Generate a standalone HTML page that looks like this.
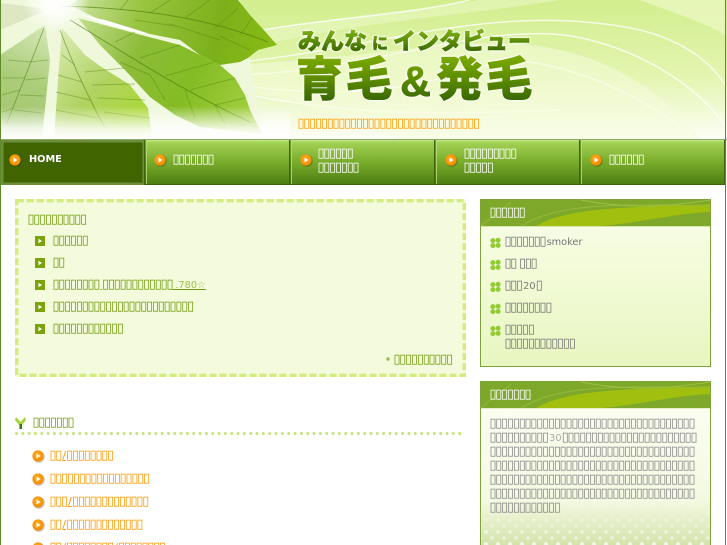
<!DOCTYPE html>
<html lang="ja"><head><meta charset="utf-8"><title>みんなにインタビュー 育毛&amp;発毛</title>
<style>
html,body{margin:0;padding:0;background:#fff}
#p{position:relative;width:727px;height:545px;overflow:hidden;background:#fff;font:9.75px/12px "DejaVu Sans","Liberation Sans","Noto Sans CJK JP",sans-serif}
#p svg{position:absolute;left:0;top:0}
.t{position:absolute;white-space:nowrap;line-height:12px;height:12px;margin-top:1px;margin-left:-.7px}
.x{font-size:13px;letter-spacing:-1.3px}
.l{padding-left:1.300px}
.d{padding-left:1.300px;font-size:11px}
.n{color:#fff;text-decoration:underline}
.g{color:#719c0c;text-decoration:underline}
.o{color:#ff9900;text-decoration:underline}
.s{color:#777}
.m{color:#888}
.h{position:absolute;font-family:"Noto Sans CJK JP",sans-serif;font-weight:900;white-space:nowrap;-webkit-background-clip:text;background-clip:text;color:transparent;-webkit-text-stroke:.6px transparent;filter:drop-shadow(0 0 1px #fff) drop-shadow(0 0 1px #fff)}
</style></head><body><div id="p">
<svg width="727" height="545" viewBox="0 0 727 545">
<defs>
<linearGradient id="bg" x1="0" y1="0" x2="0" y2="1"><stop offset="0" stop-color="#d2ee8e"/><stop offset=".55" stop-color="#e3f5b0"/><stop offset="1" stop-color="#fcfef5"/></linearGradient>
<linearGradient id="l1" gradientUnits="userSpaceOnUse" x1="80" y1="0" x2="277" y2="50"><stop offset="0" stop-color="#c8e098"/><stop offset=".3" stop-color="#98c440"/><stop offset=".7" stop-color="#7cb01a"/><stop offset="1" stop-color="#88bc14"/></linearGradient>
<linearGradient id="l2" gradientUnits="userSpaceOnUse" x1="75" y1="20" x2="250" y2="120"><stop offset="0" stop-color="#c4de90"/><stop offset=".35" stop-color="#8cbc38"/><stop offset=".65" stop-color="#84bc24"/><stop offset="1" stop-color="#a4d040"/></linearGradient>
<linearGradient id="l3" gradientUnits="userSpaceOnUse" x1="60" y1="30" x2="140" y2="110"><stop offset="0" stop-color="#dcecb8"/><stop offset=".6" stop-color="#b0d260"/><stop offset="1" stop-color="#acd83c"/></linearGradient>
<linearGradient id="l4" gradientUnits="userSpaceOnUse" x1="45" y1="30" x2="10" y2="110"><stop offset="0" stop-color="#d4e6b4"/><stop offset=".6" stop-color="#accd7a"/><stop offset="1" stop-color="#a6c872"/></linearGradient>
<linearGradient id="fade" x1="0" y1="0" x2="0" y2="1"><stop offset="0" stop-color="#fff" stop-opacity="0"/><stop offset=".7" stop-color="#fff" stop-opacity=".85"/><stop offset="1" stop-color="#fff"/></linearGradient>
<radialGradient id="sun" cx=".5" cy=".5" r=".5"><stop offset="0" stop-color="#fff"/><stop offset=".4" stop-color="#fff" stop-opacity=".85"/><stop offset="1" stop-color="#fff" stop-opacity="0"/></radialGradient>
<linearGradient id="nv" x1="0" y1="0" x2="0" y2="1"><stop offset="0" stop-color="#a9d95e"/><stop offset=".12" stop-color="#9ccb4e"/><stop offset=".5" stop-color="#78ab2a"/><stop offset="1" stop-color="#4a7c12"/></linearGradient>
<linearGradient id="sb" x1="0" y1="0" x2="0" y2="1"><stop offset="0" stop-color="#fafeea"/><stop offset="1" stop-color="#e8f6c0"/></linearGradient>
<linearGradient id="sb2" x1="0" y1="0" x2="0" y2="1"><stop offset="0" stop-color="#fdfff4"/><stop offset=".7" stop-color="#f4f9e2"/><stop offset="1" stop-color="#cfe0a4"/></linearGradient>
<linearGradient id="dm" x1="0" y1="0" x2="0" y2="1"><stop offset="0" stop-color="#fff" stop-opacity="0"/><stop offset="1" stop-color="#fff" stop-opacity=".85"/></linearGradient>
<mask id="dmk"><rect x="481" y="505" width="229" height="40" fill="url(#dm)"/></mask>
<pattern id="dia" width="12" height="12" patternUnits="userSpaceOnUse"><path d="M6 1.500 8.500 4 6 6.500 3.500 4Z" fill="#fff" fill-opacity=".85"/><path d="M0 7.500 2.500 10 0 12.500-2.500 10ZM12 7.500 14.500 10 12 12.500 9.500 10Z" fill="#fff" fill-opacity=".6"/></pattern>
<radialGradient id="ob" cx=".45" cy=".4" r=".6"><stop offset="0" stop-color="#ffb020"/><stop offset="1" stop-color="#f58a00"/></radialGradient>
<g id="oi"><circle cx=".8" cy=".8" r="6" fill="#000" fill-opacity=".22"/><circle r="5.600" fill="url(#ob)"/><path d="M-1.500-2.500 2.500 0-1.500 2.500Z" fill="#fff"/></g>
<g id="sq"><rect x="-5" y="-5" width="10" height="10" fill="#7ba30c"/><path d="M-1.500-2.200 2 0-1.500 2.200Z" fill="#fff"/></g>
<g id="cl" fill="#93cc32"><circle cx="-2.600" cy="-2.400" r="2.500"/><circle cx="2.600" cy="-2.700" r="2.500"/><circle cx="-2.600" cy="2.600" r="2.500"/><circle cx="2.600" cy="2.400" r="2.500"/><circle r="1" fill="#fff"/></g>
<g id="sw"><rect width="229" height="26" fill="#7ea82a"/><path d="M55 26C90 6 150 8 229 4V12C190 14 165 22 120 26Z" fill="#a0bf0e"/><path d="M0 26 30 2M40 26C70 8 110 2 229 6" stroke="#94b93a" stroke-width="1" fill="none"/><path d="M100 0C150 10 190 6 229 0" stroke="#9dc03f" fill="none"/></g>
</defs>

<!-- header -->
<rect x="0" y="0" width="727" height="139" fill="url(#bg)"/>
<path d="M262 30C350 15 420 10 480 0H560C470 15 370 20 262 45Z" fill="#eaf8c4" fill-opacity=".6"/>
<path d="M262 30C330 18 400 16 470 0M240 62C380 48 500 0 640 30 680 40 710 60 725 85M240 75C380 70 500 15 590 40 650 55 700 90 725 125M240 85C340 100 420 90 500 60 570 60 650 100 690 135M250 95C350 115 440 115 560 110" stroke="#fff" stroke-opacity=".75" stroke-width="1.500" fill="none"/>
<path d="M220 65C380 60 470 30 560 50 630 65 680 110 700 139H400C340 115 290 100 240 90Z" fill="#f6fcdc" fill-opacity=".55"/>
<path d="M640 0C680 15 710 25 725 35V0Z" fill="#eef9c8" fill-opacity=".7"/>
<!-- pale backdrop under the leaves -->
<path d="M0 0H240L262 130V139H0Z" fill="#eff8da"/>
<!-- leaves -->
<path d="M78 0H238L250 15 262 28 277 45 258 50 248 58 240 62 220 65 200 55 180 40 145 33 100 20 70 5Z" fill="url(#l1)"/>
<path d="M78 18 145 36 180 45 220 65 235 78 245 95 250 110 262 134 200 127 175 115 150 97 125 70 100 45Z" fill="url(#l2)"/>
<path d="M62 28 85 55 100 66 130 85 148 108 152 139H54L58 80Z" fill="url(#l3)"/>
<path d="M45 25 0 55V139H42L50 60Z" fill="url(#l4)"/>
<path d="M0 3 40 8 42 12 0 30Z" fill="#dde8c2"/>
<g stroke="#4e8510" stroke-opacity=".4" fill="none">
<path d="M60 6C130 8 200 15 268 42" stroke-opacity=".7"/>
<path d="M70 20C120 50 180 90 250 122" stroke-opacity=".7"/>
<path d="M60 30C75 70 90 100 105 128" stroke-opacity=".55"/>
<path d="M44 28C30 65 18 95 6 125" stroke-opacity=".55"/>
<path d="M120 10 128 0M150 13 170 0M185 18 210 0M215 28 238 8M240 35 252 18M135 20 175 26M170 24 220 40M220 36 250 50M115 42 135 32M140 58 180 45M165 76 215 62M190 90 235 78M215 105 245 98M120 62 150 75M150 75 165 100M185 90 195 118M215 105 225 124M85 72 125 68M92 85 135 84M98 98 145 100M104 112 150 118M75 65 62 55M82 82 58 75M90 100 56 92M98 118 56 110M30 62 8 60M25 78 3 78M20 90 2 95M14 108 2 112M30 62 48 60M25 80 46 78M20 95 44 96M14 110 42 113"/>
</g>
<path d="M78 14 105 20 147 33 148 35 105 24Z" fill="#fff"/>
<path d="M0 106H290V139H0Z" fill="url(#fade)"/>
<circle cx="56" cy="0" r="34" fill="url(#sun)"/>

<!-- nav -->
<rect x="0" y="139" width="727" height="1" fill="#8da869"/>
<rect x="1" y="140" width="724" height="45" fill="url(#nv)"/>
<rect x="1" y="140" width="724" height="1.500" fill="#c3e786" fill-opacity=".8"/>
<rect x="1" y="184" width="724" height="1" fill="#3f660e"/>
<rect x="1" y="140" width="143" height="45" fill="#6d8f3c"/>
<rect x="3.500" y="142.500" width="139" height="40" fill="#3f6400"/>
<rect x="144" y="140" width="1.500" height="45" fill="#3f660e"/><rect x="289" y="140" width="1.500" height="45" fill="#3f660e"/><rect x="434" y="140" width="1.500" height="45" fill="#3f660e"/><rect x="579" y="140" width="1.500" height="45" fill="#3f660e"/><rect x="724" y="140" width="1.500" height="45" fill="#3f660e"/>
<rect x="146" y="140" width=".8" height="44" fill="#b9e07a"/><rect x="291" y="140" width=".8" height="44" fill="#b9e07a"/><rect x="436" y="140" width=".8" height="44" fill="#b9e07a"/><rect x="581" y="140" width=".8" height="44" fill="#b9e07a"/>
<use href="#oi" x="15" y="160"/><use href="#oi" x="160" y="160"/><use href="#oi" x="306" y="160"/><use href="#oi" x="451" y="160"/><use href="#oi" x="596" y="160"/>

<!-- page borders -->
<rect x="0" y="0" width="1" height="545" fill="#5f8a2a"/>
<rect x="725" y="0" width="1" height="545" fill="#5f8a2a"/>

<!-- dashed box -->
<rect x="15" y="199" width="451" height="178" fill="#f4fbdd"/>
<rect x="16.700" y="200.700" width="447.600" height="174.600" fill="none" stroke="#d3ec80" stroke-width="3.400" stroke-dasharray="7 3"/>
<use href="#sq" x="40" y="241"/><use href="#sq" x="40" y="263"/><use href="#sq" x="40" y="285"/><use href="#sq" x="40" y="307"/><use href="#sq" x="40" y="329"/>
<circle cx="388" cy="359" r="1.700" fill="#9dbb50"/>

<!-- heading -->
<path d="M16 417 20.500 422 25 417 26 420 22 425H19L15 420Z" fill="#a7d43a"/><rect x="19.500" y="424" width="2.500" height="5" fill="#2f7a10"/>
<path d="M16.500 433.500h447" stroke="#c4e47a" stroke-width="3" stroke-linecap="round" stroke-dasharray="0 6.330"/>
<use href="#oi" x="38" y="456"/><use href="#oi" x="38" y="479"/><use href="#oi" x="38" y="502"/><use href="#oi" x="38" y="525"/><use href="#oi" x="38" y="548"/>

<!-- side box 1 -->
<rect x="480.500" y="199.500" width="230" height="167" fill="url(#sb)" stroke="#7ea33a"/>
<use href="#sw" x="481" y="200"/><rect x="481" y="226" width="229" height="1" fill="#d6e8a8"/>
<use href="#cl" x="495.500" y="243"/><use href="#cl" x="495.500" y="265"/><use href="#cl" x="495.500" y="287"/><use href="#cl" x="495.500" y="309"/><use href="#cl" x="495.500" y="331"/>

<!-- side box 2 -->
<rect x="480.500" y="381.500" width="230" height="170" fill="url(#sb2)" stroke="#7ea33a"/>
<rect x="481" y="505" width="229" height="40" fill="url(#dia)" mask="url(#dmk)"/>
<use href="#sw" x="481" y="382"/><rect x="481" y="408" width="229" height="1" fill="#e6f0c8"/>
</svg>

<div class="h" style="left:298px;top:21px;font-size:23px;line-height:36px;background-image:linear-gradient(#7cae10 25%,#3c6c00 75%)">みんな<span style="font-size:16px;padding:0 5px">に</span>インタビュー</div>
<div class="h" style="left:296px;top:41px;font-size:47px;line-height:70px;letter-spacing:2.500px;background-image:linear-gradient(#7aa800 22%,#5c8c00 50%,#386800 78%)">育毛<span style="font-family:'Liberation Sans',sans-serif;font-size:43px;padding:0 5px;letter-spacing:0">&amp;</span>発毛</div>
<div class="t x" style="left:298px;top:117px;color:#ff9900">▯▯▯▯▯▯▯▯▯▯▯▯▯▯▯▯▯▯▯▯▯▯▯▯▯▯▯▯▯▯▯</div>

<div class="t" style="left:29.700px;top:153px;color:#fff;font-weight:bold">HOME</div>
<div class="t x n" style="left:173px;top:153px">▯▯▯▯▯▯▯</div>
<div class="t x n" style="left:318px;top:147px">▯▯▯▯▯▯</div>
<div class="t x n" style="left:318px;top:161px">▯▯▯▯▯▯▯</div>
<div class="t x n" style="left:464px;top:147px">▯▯▯▯▯▯▯▯▯</div>
<div class="t x n" style="left:464px;top:161px">▯▯▯▯▯</div>
<div class="t x n" style="left:609px;top:153px">▯▯▯▯▯▯</div>

<div class="t x" style="left:28px;top:213px;color:#719c0c">▯▯▯▯▯▯▯▯▯▯</div>
<div class="t x g" style="left:53px;top:234px">▯▯▯▯▯▯</div>
<div class="t x g" style="left:53px;top:256px">▯▯</div>
<div class="t g" style="left:53px;top:278px"><span class="x">▯▯▯▯▯▯▯▯ ▯▯▯▯▯▯▯▯▯▯▯▯</span> <span style="color:#9cc04a">.780☆</span></div>
<div class="t x g" style="left:53px;top:300px">▯▯▯▯▯▯▯▯▯▯▯▯▯▯▯▯▯▯▯▯▯▯▯▯</div>
<div class="t x g" style="left:53px;top:322px">▯▯▯▯▯▯▯▯▯▯▯▯</div>
<div class="t x g" style="left:394px;top:353px">▯▯▯▯▯▯▯▯▯▯</div>

<div class="t x" style="left:33px;top:416px;color:#719c0c">▯▯▯▯▯▯▯</div>
<div class="t o" style="left:50px;top:449px"><span class="x">▯▯</span><span class="d">/</span><span class="x">▯▯▯▯▯▯▯▯</span></div>
<div class="t x o" style="left:50px;top:472px">▯▯▯▯▯▯▯▯▯▯▯▯▯▯▯▯▯</div>
<div class="t o" style="left:50px;top:495px"><span class="x">▯▯▯</span><span class="d">/</span><span class="x">▯▯▯▯▯▯▯▯▯▯▯▯▯</span></div>
<div class="t o" style="left:50px;top:518px"><span class="x">▯▯</span><span class="d">/</span><span class="x">▯▯▯▯▯▯▯▯▯▯▯▯▯</span></div>
<div class="t o" style="left:50px;top:541px"><span class="x">▯▯</span><span class="d">/</span><span class="x">▯▯▯▯▯▯▯▯</span><span class="d">/</span><span class="x">▯▯▯▯▯▯▯▯</span></div>

<div class="t x" style="left:490px;top:206px;color:#fff">▯▯▯▯▯▯</div>
<div class="t s" style="left:505px;top:235px"><span class="x">▯▯▯▯▯▯▯</span><span class="l">smoker</span></div>
<div class="t s x" style="left:505px;top:257px">▯▯ ▯▯▯</div>
<div class="t s" style="left:505px;top:279px"><span class="x">▯▯▯</span><span class="l">20</span><span class="x">▯</span></div>
<div class="t s x" style="left:505px;top:301px">▯▯▯▯▯▯▯▯</div>
<div class="t s x" style="left:505px;top:323px">▯▯▯▯▯</div>
<div class="t s x" style="left:505px;top:337px">▯▯▯▯▯▯▯▯▯▯▯▯</div>

<div class="t x" style="left:490px;top:388px;color:#fff">▯▯▯▯▯▯▯</div>
<div class="t m x" style="left:490px;top:417px">▯▯▯▯▯▯▯▯▯▯▯▯▯▯▯▯▯▯▯▯▯▯▯▯▯▯▯▯▯▯▯▯▯▯▯</div>
<div class="t m" style="left:490px;top:431px"><span class="x">▯▯▯▯▯▯▯▯▯▯</span><span class="l" style="color:#aaa">30</span><span class="x">▯▯▯▯▯▯▯▯▯▯▯▯▯▯▯▯▯▯▯▯▯▯▯</span></div>
<div class="t m x" style="left:490px;top:445px">▯▯▯▯▯▯▯▯▯▯▯▯▯▯▯▯▯▯▯▯▯▯▯▯▯▯▯▯▯▯▯▯▯▯▯</div>
<div class="t m x" style="left:490px;top:459px">▯▯▯▯▯▯▯▯▯▯▯▯▯▯▯▯▯▯▯▯▯▯▯▯▯▯▯▯▯▯▯▯▯▯▯</div>
<div class="t m x" style="left:490px;top:473px">▯▯▯▯▯▯▯▯▯▯▯▯▯▯▯▯▯▯▯▯▯▯▯▯▯▯▯▯▯▯▯▯▯▯▯</div>
<div class="t m x" style="left:490px;top:487px">▯▯▯▯▯▯▯▯▯▯▯▯▯▯▯▯▯▯▯▯▯▯▯▯▯▯▯▯▯▯▯▯▯▯▯</div>
<div class="t m x" style="left:490px;top:501px">▯▯▯▯▯▯▯▯▯▯▯▯</div>
</div></body></html>
